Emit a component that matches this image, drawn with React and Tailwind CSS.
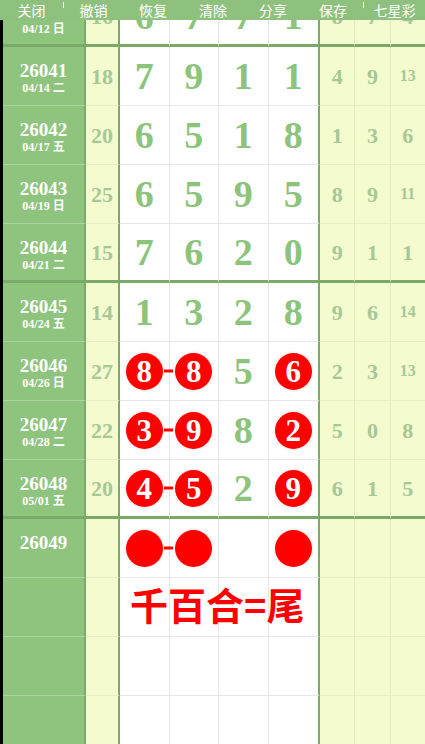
import React from 'react';

const rows = [
    { id: '26040', date: '04/12 日', miss: '16', nums: [6, 7, 7, 1], red: [], right: [8, 7, 4], end: true },
    { id: '26041', date: '04/14 二', miss: '18', nums: [7, 9, 1, 1], red: [], right: [4, 9, 13] },
    { id: '26042', date: '04/17 五', miss: '20', nums: [6, 5, 1, 8], red: [], right: [1, 3, 6] },
    { id: '26043', date: '04/19 日', miss: '25', nums: [6, 5, 9, 5], red: [], right: [8, 9, 11] },
    { id: '26044', date: '04/21 二', miss: '15', nums: [7, 6, 2, 0], red: [], right: [9, 1, 1], end: true },
    { id: '26045', date: '04/24 五', miss: '14', nums: [1, 3, 2, 8], red: [], right: [9, 6, 14] },
    { id: '26046', date: '04/26 日', miss: '27', nums: [8, 8, 5, 6], red: [0, 1, 3], right: [2, 3, 13] },
    { id: '26047', date: '04/28 二', miss: '22', nums: [3, 9, 8, 2], red: [0, 1, 3], right: [5, 0, 8] },
    { id: '26048', date: '05/01 五', miss: '20', nums: [4, 5, 2, 9], red: [0, 1, 3], right: [6, 1, 5], end: true },
    { id: '26049', date: '', miss: '', nums: ['', '', '', ''], red: [0, 1, 3], right: ['', '', ''] },
    { id: '', date: '', miss: '', nums: ['', '', '', ''], red: [], right: ['', '', ''], note: true },
    { id: '', date: '', miss: '', nums: ['', '', '', ''], red: [], right: ['', '', ''] },
    { id: '', date: '', miss: '', nums: ['', '', '', ''], red: [], right: ['', '', ''] },
];

const serif = "font-['Liberation_Serif','DejaVu_Serif',serif] font-bold";

const Ball = ({ value }) => (
    <div className={`w-[37px] h-[37px] rounded-full bg-[#ff0000] ring-2 ring-[#fff5f5] shadow-[0_0_2px_rgba(255,200,200,0.9)] flex items-center justify-center text-white text-[31px] leading-none ${serif}`}>
        {value}
    </div>
);

const Row = ({ row }) => {
    const dark = 'border-b-[3px] border-b-[#79aa6a]';
    return (
        <div className="flex h-[59px] relative">
            <div className={`w-[83px] h-full shrink-0 bg-[#8ec47e] border-r-2 border-r-[#79aa6a] flex flex-col items-center pt-[14px] text-white ${row.end ? dark : 'border-b border-b-[#a9d69a]'}`}>
                <div className={`text-[19px] leading-[20px] ${serif}`}>{row.id}</div>
                <div className="text-[12px] leading-[14px] font-['Liberation_Serif','Noto_Sans_CJK_SC',serif] font-bold">{row.date}</div>
            </div>
            <div className={`w-[34px] h-full shrink-0 bg-[#f4fbcf] border-r-2 border-r-[#79aa6a] flex items-center justify-center text-[22px] text-[#a6c896] ${serif} ${row.end ? dark : 'border-b border-b-[#e4efc4]'}`}>
                {row.miss}
            </div>
            {row.nums.map((n, i) => {
                const isRed = row.red.includes(i);
                return (
                    <div
                        key={i}
                        className={`${i === 3 ? 'w-[51.5px] border-r-2 border-r-[#79aa6a]' : 'w-[49.5px] border-r border-r-[#e6e6e6]'} h-full shrink-0 bg-white relative flex items-center justify-center text-[38px] leading-none text-[#8cc47c] ${serif} ${row.end ? dark : 'border-b border-b-[#e8e8e8]'}`}
                    >
                        {i === 1 && isRed && row.red.includes(0) && (
                            <div className="absolute left-[-6px] top-1/2 -translate-y-1/2 w-[9px] h-[3px] bg-[#ff0000] z-10" />
                        )}
                        {isRed ? <Ball value={n} /> : n}
                    </div>
                );
            })}
            {row.right.map((n, i) => (
                <div
                    key={i}
                    className={`flex-1 h-full bg-[#f4fbcf] flex items-center justify-center text-[#a6c896] ${serif} ${String(n).length > 1 ? 'text-[16px]' : 'text-[22px]'} ${i < 2 ? 'border-r border-r-[#deedc4]' : ''} ${row.end ? dark : 'border-b border-b-[#e4efc4]'}`}
                >
                    {n}
                </div>
            ))}
            {row.note && (
                <div className="absolute left-[127px] top-[2px] text-[38px] leading-[48px] font-bold text-[#ff0000] font-['Noto_Sans_CJK_SC','Noto_Sans',sans-serif] z-10">
                    千百合=尾
                </div>
            )}
        </div>
    );
};

export default function App() {
    const menu = ['撤销', '恢复', '清除', '分享', '保存'];
    return (
        <div className="relative w-[425px] h-[744px] overflow-hidden bg-black">
            <div className="absolute top-0 left-0 right-0 h-[20px] bg-[#8fc17e] z-20 flex items-center text-white text-[14px] leading-none font-['Noto_Sans_CJK_SC','Noto_Sans',sans-serif]">
                <div className="w-[63px] text-center">关闭</div>
                <div className="w-px h-[6px] bg-white self-start mt-[2px]" />
                {menu.map((m, i) => (
                    <div key={m} className={`${i === 0 ? 'w-[59px]' : 'w-[60px]'} text-center`}>{m}</div>
                ))}
                <div className="w-px h-[6px] bg-white self-start mt-[2px]" />
                <div className="flex-1 text-center">七星彩</div>
            </div>
            <div className="ml-[3px] -mt-[12px]">
                {rows.map((row, i) => (
                    <Row key={i} row={row} />
                ))}
            </div>
        </div>
    );
}
